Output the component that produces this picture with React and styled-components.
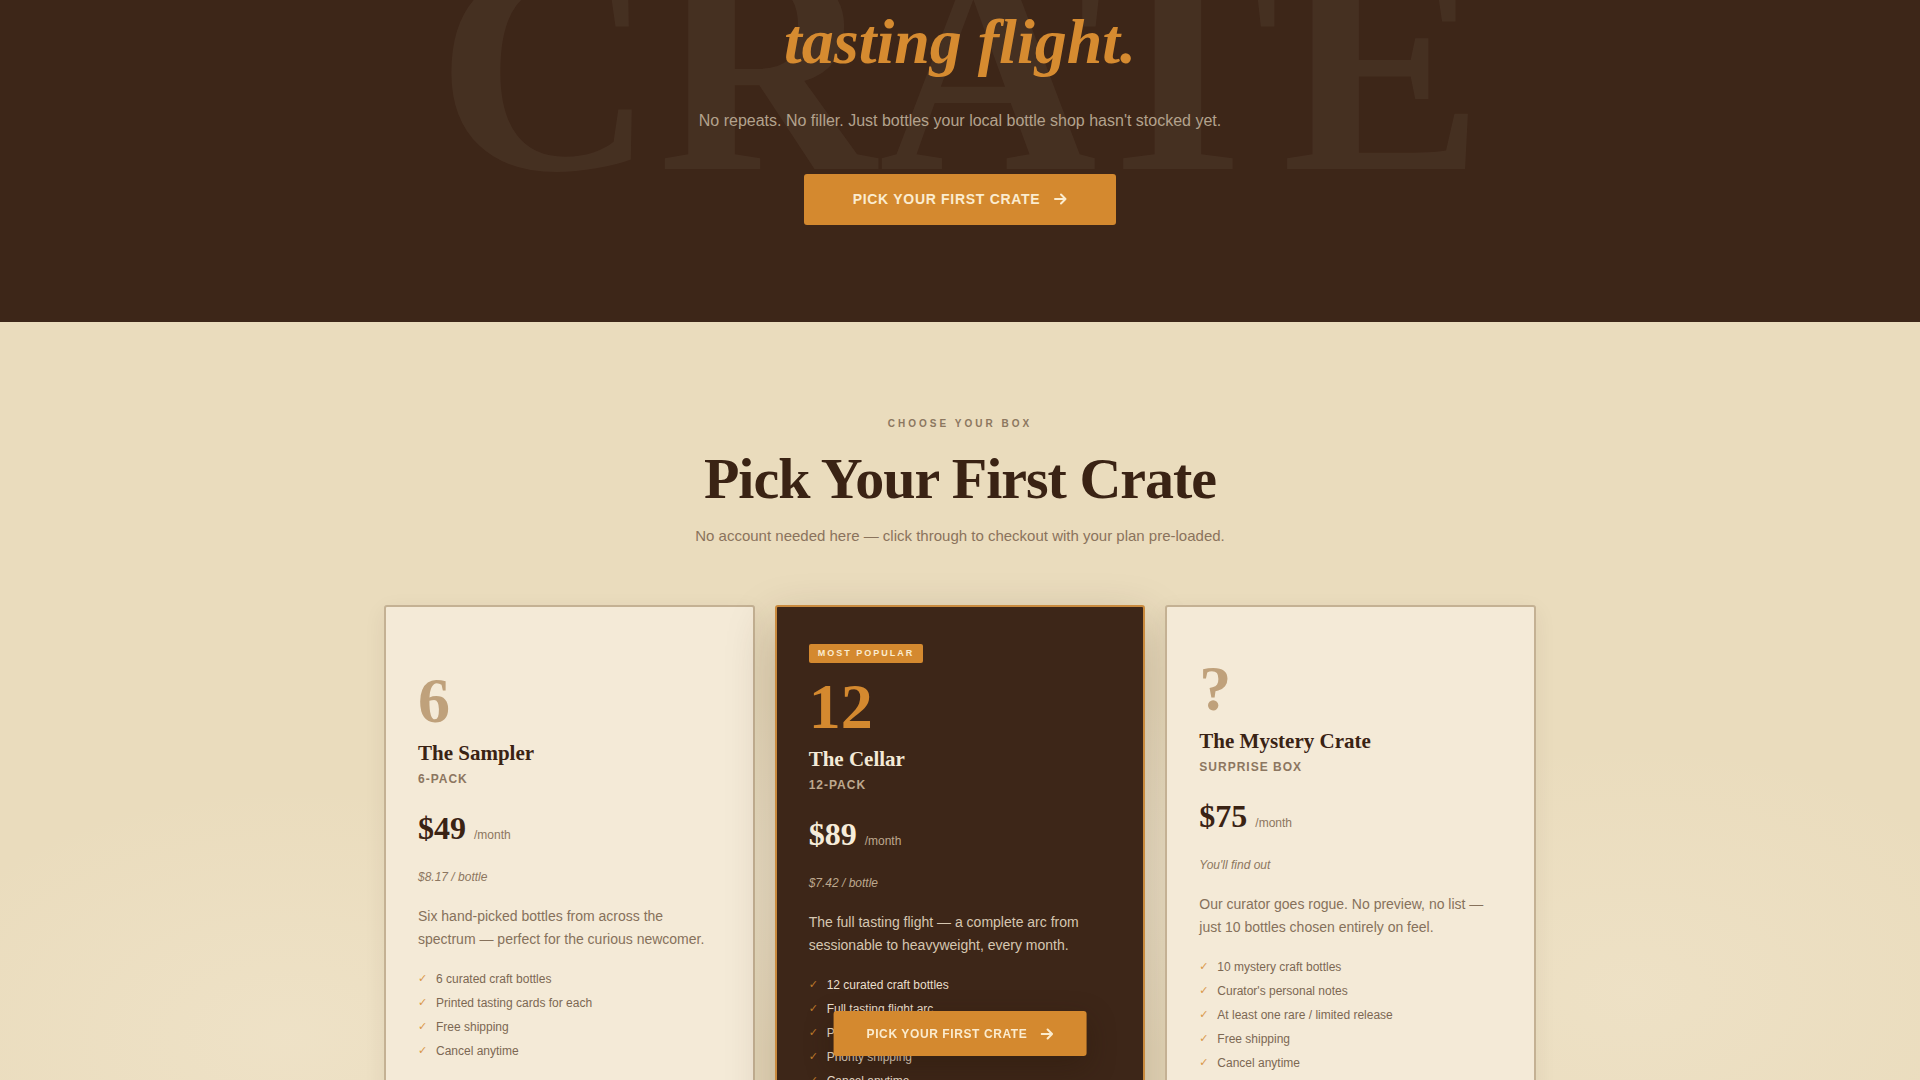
import React from 'react';
import styled, { createGlobalStyle } from 'styled-components';

const serif = '"Liberation Serif", "Times New Roman", serif';
const sans = '"Liberation Sans", Arial, sans-serif';

const GlobalStyle = createGlobalStyle`
  * { box-sizing: border-box; }
  body {
    margin: 0;
    background: #eadcbd;
    font-family: ${sans};
    color: #3a2314;
  }
`;

// Hero band
const Hero = styled.section`
  position: relative;
  overflow: hidden;
  background: #3d2618;
  height: 322px;
  padding-top: 7px;
  text-align: center;
`;

const Watermark = styled.div`
  position: absolute;
  left: 50%;
  top: -84px;
  transform: translateX(-50%);
  padding-left: 3px;
  font-family: ${serif};
  font-weight: 700;
  font-size: 302px;
  line-height: 1;
  letter-spacing: 3px;
  color: rgba(243, 233, 214, 0.05);
  white-space: nowrap;
  pointer-events: none;
`;

const HeroInner = styled.div`
  position: relative;
  display: flex;
  flex-direction: column;
  align-items: center;
`;

const HeroTitle = styled.h1`
  margin: 0;
  font-family: ${serif};
  font-style: italic;
  font-weight: 700;
  font-size: 64px;
  line-height: 1.1;
  color: #d68b30;
`;

const HeroLead = styled.p`
  margin: 31px 0 0;
  font-size: 16px;
  line-height: 1.6;
  color: #b3a28d;
`;

const CtaButton = styled.button`
  display: inline-flex;
  align-items: center;
  justify-content: center;
  gap: ${(p) => (p.$small ? '13px' : '14px')};
  height: ${(p) => (p.$small ? '45px' : '51px')};
  padding: ${(p) => (p.$small ? '0 33px' : '0 49px')};
  margin-top: ${(p) => (p.$small ? '0' : '40px')};
  border: none;
  border-radius: 3px;
  background: #d4892f;
  color: #fbeccf;
  font-family: ${sans};
  font-weight: 700;
  font-size: ${(p) => (p.$small ? '12px' : '14px')};
  letter-spacing: 0.05em;
  cursor: pointer;
  box-shadow: ${(p) => (p.$small ? '0 10px 28px rgba(40, 22, 10, 0.35)' : 'none')};

  &:hover {
    background: #c27a24;
  }
`;

const StickyCta = styled.div`
  position: fixed;
  left: 50%;
  bottom: 24px;
  transform: translateX(-50%);
  z-index: 10;
`;

const Arrow = () => (
  <svg width="13" height="12" viewBox="0 0 13 12" fill="none" stroke="currentColor" strokeWidth="2" strokeLinecap="round" strokeLinejoin="round">
    <path d="M1 6h10.5M7 1.5L11.5 6 7 10.5" />
  </svg>
);

// Plans section
const Plans = styled.section`
  padding: 96px 0 80px;
  background:
    radial-gradient(ellipse 40% 30% at 50% 62%, rgba(246, 236, 216, 0.55), transparent 70%),
    radial-gradient(ellipse 30% 40% at 15% 80%, rgba(246, 236, 216, 0.35), transparent 70%),
    radial-gradient(ellipse 30% 40% at 85% 75%, rgba(246, 236, 216, 0.3), transparent 70%),
    #eadcbd;
  text-align: center;
`;

const Eyebrow = styled.div`
  font-size: 10px;
  line-height: 12px;
  font-weight: 700;
  letter-spacing: 3px;
  color: #8c7760;
`;

const SectionTitle = styled.h2`
  margin: 17px 0 0;
  font-family: ${serif};
  font-weight: 700;
  font-size: 58px;
  line-height: 1.1;
  letter-spacing: -1px;
  color: #3a2314;
`;

const SectionLead = styled.p`
  margin: 13px 0 0;
  font-size: 15px;
  line-height: 24px;
  color: #8a735c;
`;

const Grid = styled.div`
  width: 1152px;
  margin: 57px auto 0;
  display: grid;
  grid-template-columns: repeat(3, 1fr);
  gap: 20px;
  text-align: left;
`;

const Card = styled.article`
  display: flex;
  flex-direction: column;
  justify-content: center;
  padding: ${(p) => (p.$featured ? '37px 32px 40px' : '37px 32px 45px')};
  border-radius: 3px;
  border: 2px solid ${(p) => (p.$featured ? '#c98a3e' : '#c4b193')};
  background: ${(p) => (p.$featured ? '#3d2618' : '#f4ead7')};
  box-shadow: ${(p) =>
    p.$featured ? '0 18px 48px rgba(61, 38, 24, 0.28)' : '0 6px 22px rgba(61, 38, 24, 0.07)'};
`;

const Badge = styled.span`
  align-self: flex-start;
  height: 19px;
  line-height: 19px;
  padding: 0 9px;
  margin-bottom: 12px;
  border-radius: 2px;
  background: #d4892f;
  color: #fbeccf;
  font-size: 9px;
  font-weight: 700;
  letter-spacing: 2px;
`;

const Count = styled.div`
  font-family: ${serif};
  font-weight: 700;
  font-size: 64px;
  line-height: 1;
  color: ${(p) => (p.$featured ? '#d4892f' : '#bfa17b')};
  margin-bottom: 8px;
`;

const Name = styled.h3`
  margin: 0 0 6px;
  font-family: ${serif};
  font-weight: 700;
  font-size: 21px;
  line-height: 1.2;
  color: ${(p) => (p.$featured ? '#f4ead7' : '#3a2314')};
`;

const Pack = styled.div`
  font-size: 12px;
  line-height: 14px;
  font-weight: 700;
  letter-spacing: 1px;
  color: ${(p) => (p.$featured ? '#bda88e' : '#8c7660')};
`;

const PriceRow = styled.div`
  display: flex;
  align-items: baseline;
  gap: 8px;
  margin-top: 26px;
`;

const Price = styled.span`
  font-family: ${serif};
  font-weight: 700;
  font-size: 32px;
  line-height: 1;
  color: ${(p) => (p.$featured ? '#f6ecda' : '#3a2314')};
`;

const Per = styled.span`
  font-size: 12px;
  color: ${(p) => (p.$featured ? '#bda88e' : '#8c7660')};
`;

const PerBottle = styled.div`
  margin-top: 24px;
  font-size: 12px;
  line-height: 18px;
  font-style: italic;
  color: ${(p) => (p.$featured ? '#bda88e' : '#8c7660')};
`;

const Desc = styled.p`
  margin: 19px 0 0;
  font-size: 14px;
  line-height: 23px;
  color: ${(p) => (p.$featured ? '#d6c7b1' : '#86715b')};
`;

const Features = styled.ul`
  list-style: none;
  margin: 16px 0 0;
  padding: 0;
`;

const Feature = styled.li`
  display: flex;
  align-items: center;
  font-size: 12px;
  line-height: 24px;
  color: ${(p) => (p.$featured ? '#eadfcc' : '#7c6853')};
`;

const Check = styled.span`
  width: 12px;
  margin-right: 6px;
  font-family: "DejaVu Sans", sans-serif;
  font-size: 11px;
  color: #d4892f;
  opacity: 0.85;
`;

const plans = [
  {
    count: '6',
    name: 'The Sampler',
    pack: '6-PACK',
    price: '$49',
    perBottle: '$8.17 / bottle',
    desc: 'Six hand-picked bottles from across the spectrum — perfect for the curious newcomer.',
    features: ['6 curated craft bottles', 'Printed tasting cards for each', 'Free shipping', 'Cancel anytime'],
  },
  {
    count: '12',
    name: 'The Cellar',
    pack: '12-PACK',
    price: '$89',
    perBottle: '$7.42 / bottle',
    desc: 'The full tasting flight — a complete arc from sessionable to heavyweight, every month.',
    features: [
      '12 curated craft bottles',
      'Full tasting flight arc',
      'Printed tasting cards for each',
      'Priority shipping',
      'Cancel anytime',
    ],
    featured: true,
  },
  {
    count: '?',
    name: 'The Mystery Crate',
    pack: 'SURPRISE BOX',
    price: '$75',
    perBottle: "You'll find out",
    desc: 'Our curator goes rogue. No preview, no list — just 10 bottles chosen entirely on feel.',
    features: [
      '10 mystery craft bottles',
      "Curator's personal notes",
      'At least one rare / limited release',
      'Free shipping',
      'Cancel anytime',
    ],
  },
];

const PlanCard = ({ plan }) => {
  const f = plan.featured;
  return (
    <Card $featured={f}>
      {f && <Badge>MOST POPULAR</Badge>}
      <Count $featured={f}>{plan.count}</Count>
      <Name $featured={f}>{plan.name}</Name>
      <Pack $featured={f}>{plan.pack}</Pack>
      <PriceRow>
        <Price $featured={f}>{plan.price}</Price>
        <Per $featured={f}>/month</Per>
      </PriceRow>
      <PerBottle $featured={f}>{plan.perBottle}</PerBottle>
      <Desc $featured={f}>{plan.desc}</Desc>
      <Features>
        {plan.features.map((item) => (
          <Feature key={item} $featured={f}>
            <Check>✓</Check>
            {item}
          </Feature>
        ))}
      </Features>
    </Card>
  );
};

const App = () => (
  <>
    <GlobalStyle />
    <Hero>
      <Watermark>CRATE</Watermark>
      <HeroInner>
        <HeroTitle>tasting flight.</HeroTitle>
        <HeroLead>No repeats. No filler. Just bottles your local bottle shop hasn't stocked yet.</HeroLead>
        <CtaButton>
          PICK YOUR FIRST CRATE <Arrow />
        </CtaButton>
      </HeroInner>
    </Hero>

    <Plans>
      <Eyebrow>CHOOSE YOUR BOX</Eyebrow>
      <SectionTitle>Pick Your First Crate</SectionTitle>
      <SectionLead>No account needed here — click through to checkout with your plan pre-loaded.</SectionLead>
      <Grid>
        {plans.map((plan) => (
          <PlanCard key={plan.name} plan={plan} />
        ))}
      </Grid>
    </Plans>

    <StickyCta>
      <CtaButton $small>
        PICK YOUR FIRST CRATE <Arrow />
      </CtaButton>
    </StickyCta>
  </>
);

export default App;
